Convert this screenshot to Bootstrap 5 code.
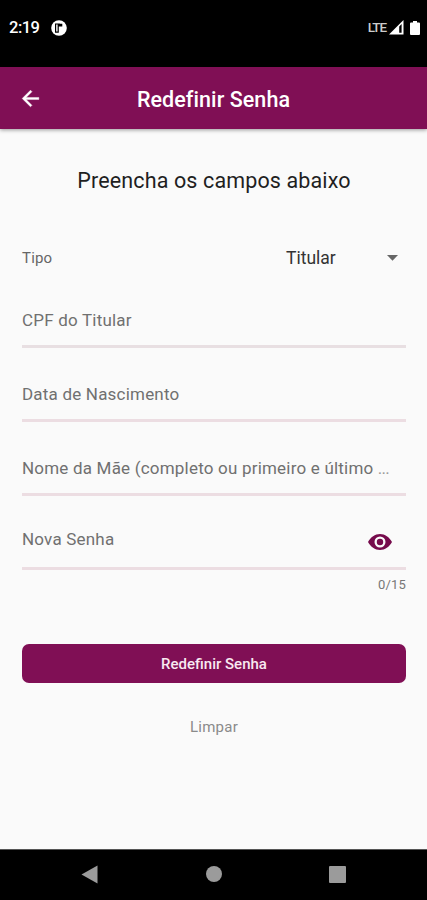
<!DOCTYPE html>
<html lang="pt-BR">
<head>
<meta charset="utf-8">
<meta name="viewport" content="width=device-width, initial-scale=1">
<title>Redefinir Senha</title>
<link href="https://cdn.jsdelivr.net/npm/bootstrap@5.3.0/dist/css/bootstrap.min.css" rel="stylesheet">
<style>
  body { font-family: Roboto, "Liberation Sans", sans-serif; background: #fafafa; color: #1f1f1f; height: 900px; overflow: hidden; }
  svg { display: block; flex: none; }
  .status-bar { height: 67px; background: #000; padding: 0 7px 12px 9px; }
  .clock { font-size: 16.5px; font-weight: 500; line-height: 20px; letter-spacing: -.5px; width: 42px; }
  .network { font-size: 13.5px; line-height: 20px; letter-spacing: -1.1px; font-weight: 500; color: #ccc; padding: 0 3px 2px 0; }
  .app-bar { height: 62px; background: #800f55; box-shadow: 0 1px 4px rgba(0,0,0,.4); padding: 0 19px 0 18px; }
  .app-title { font-size: 21.5px; font-weight: 500; line-height: 30px; letter-spacing: .06px; padding-top: 3px; }
  .form-area { padding: 0 21px 0 22px; }
  .heading { font-size: 21.5px; line-height: 30px; letter-spacing: .13px; margin-top: 37px; font-weight: 400; }
  .type-row { height: 48px; margin-top: 38px; }
  .type-label { font-size: 15px; letter-spacing: .2px; color: #666; }
  .type-value { font-size: 17.5px; letter-spacing: 0; color: #333; width: 101px; }
  .field { height: 74px; border-bottom: 3px solid #ecdde2; font-size: 17px; line-height: 24px; letter-spacing: .2px; color: #707070; padding-bottom: 13px; }
  .field-first { height: 66px; border-color: #e8dfe2; }
  .field-password { padding-bottom: 16px; }
  .ellipsis-mark { letter-spacing: -.8px; color: #999; }
  .eye { margin: 0 14px -3px 0; }
  .counter { font-size: 13px; line-height: 20px; letter-spacing: .2px; color: #777; margin-top: 5px; }
  .submit { height: 39px; margin-top: 49px; background: #800f55; color: #f8e9f1; border-radius: 7px; font-size: 15px; font-weight: 500; line-height: 20px; border: 0; }
  .submit:hover { background: #6d0c48; color: #fff; }
  .clear { font-size: 15px; line-height: 20px; letter-spacing: .25px; color: #8a8a8a; margin-top: 34px; }
  .nav-bar { height: 51px; background: #000; border-top: 1px solid #555; padding: 0 81px 2px 81px; }
</style>
<script src="https://cdn.jsdelivr.net/npm/bootstrap@5.3.0/dist/js/bootstrap.bundle.min.js"></script>
</head>
<body class="d-flex flex-column">
<div class="status-bar d-flex align-items-center text-white">
  <span class="clock">2:19</span>
  <svg width="16" height="16" viewBox="0 0 16 16"><circle cx="8" cy="8" r="7.8" fill="#fff"/><path d="M4.600 4h2.600v8.200H4.600zM8.300 3.600v3M9.500 4.300h1.200v1.700H9.500z" fill="none" stroke="#000" stroke-width="1.200"/></svg>
  <div class="d-flex align-items-center ms-auto">
    <span class="network">LTE</span>
    <svg width="15" height="15" viewBox="0 0 15 15"><path d="M0 14.500L14.500 0v14.500z" fill="#fff"/><path d="M10.200 6.500 12.600 4v8.800h-2.400z" fill="#000"/></svg>
    <svg width="10" height="14" viewBox="0 0 10 14" style="margin-left:6px"><path d="M3 0h4v1.500h2q1 0 1 1V13q0 1-1 1H1q-1 0-1-1V2.500q0-1 1-1h2z" fill="#fff"/></svg>
  </div>
</div>
<header class="app-bar d-flex align-items-center text-white">
  <svg width="25" height="25" viewBox="0 0 24 24"><path d="M20 11H7.830l5.590-5.590L12 4l-8 8 8 8 1.410-1.410L7.830 13H20z" fill="#fff" stroke="#fff" stroke-width=".4"/></svg>
  <h1 class="app-title flex-grow-1 text-center mb-0 me-4">Redefinir Senha</h1>
</header>
<main class="form-area flex-grow-1">
  <h2 class="heading text-center mb-0">Preencha os campos abaixo</h2>
  <div class="type-row d-flex align-items-center">
    <span class="type-label me-auto">Tipo</span>
    <span class="type-value">Titular</span>
    <svg class="me-2" width="11" height="6" viewBox="0 0 11 6"><path d="M0 0h11L5.500 5.800z" fill="#666"/></svg>
  </div>
  <div class="field field-first d-flex align-items-end">CPF do Titular</div>
  <div class="field d-flex align-items-end">Data de Nascimento</div>
  <div class="field d-flex align-items-end"><span>Nome da Mãe (completo ou primeiro e último <span class="ellipsis-mark">...</span></span></div>
  <div class="field field-password d-flex align-items-end justify-content-between">
    <span>Nova Senha</span>
    <svg class="eye" width="24" height="24" viewBox="0 0 24 24"><path d="M12 4C7 4 2.700 7.200 0 12c2.700 4.800 7 8 12 8s9.300-3.200 12-8c-2.700-4.800-7-8-12-8zm0 13.500a5.500 5.500 0 1 1 0-11 5.500 5.500 0 0 1 0 11zm0-8.700a3.200 3.200 0 1 0 0 6.400 3.200 3.200 0 0 0 0-6.400z" fill="#760b4c" fill-rule="evenodd"/></svg>
  </div>
  <div class="counter text-end">0/15</div>
  <button type="button" class="btn submit w-100 d-flex align-items-center justify-content-center p-0">Redefinir Senha</button>
  <div class="clear text-center">Limpar</div>
</main>
<nav class="nav-bar d-flex align-items-center justify-content-between">
  <svg width="17" height="19" viewBox="0 0 17 19"><path d="M0.500 9.500 16.500 0.500v18z" fill="#9b9b9b"/></svg>
  <svg width="16" height="16" viewBox="0 0 16 16"><circle cx="8" cy="8" r="8" fill="#9b9b9b"/></svg>
  <svg width="17" height="17" viewBox="0 0 17 17"><rect width="17" height="17" rx="1" fill="#9b9b9b"/></svg>
</nav>
</body>
</html>
